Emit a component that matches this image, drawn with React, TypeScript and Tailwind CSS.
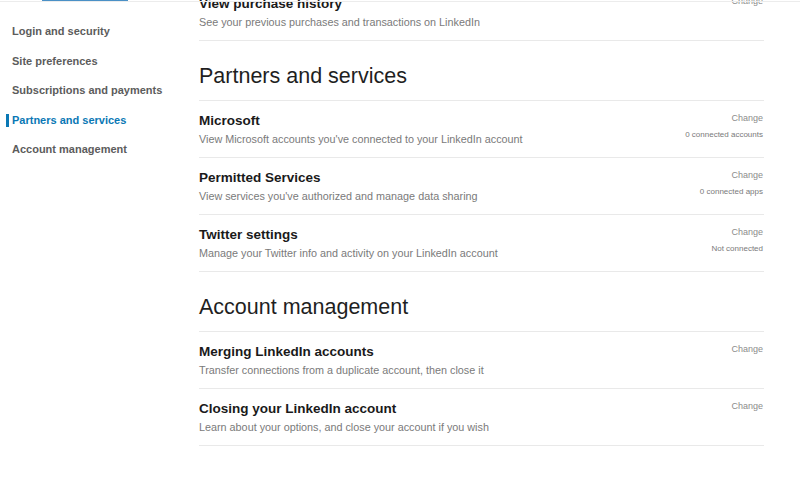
import React from 'react';

type Row = { title: string; desc: string; action?: string; meta?: string };

const navItems = [
  'Login and security',
  'Site preferences',
  'Subscriptions and payments',
  'Partners and services',
  'Account management',
];

const partners: Row[] = [
  {
    title: 'Microsoft',
    desc: "View Microsoft accounts you've connected to your LinkedIn account",
    action: 'Change',
    meta: '0 connected accounts',
  },
  {
    title: 'Permitted Services',
    desc: "View services you've authorized and manage data sharing",
    action: 'Change',
    meta: '0 connected apps',
  },
  {
    title: 'Twitter settings',
    desc: 'Manage your Twitter info and activity on your LinkedIn account',
    action: 'Change',
    meta: 'Not connected',
  },
];

const account: Row[] = [
  {
    title: 'Merging LinkedIn accounts',
    desc: 'Transfer connections from a duplicate account, then close it',
    action: 'Change',
  },
  {
    title: 'Closing your LinkedIn account',
    desc: 'Learn about your options, and close your account if you wish',
    action: 'Change',
  },
];

const SettingRow: React.FC<{ row: Row }> = ({ row }) => (
  <li className="flex justify-between border-b border-[#e9e9e9] pt-[10px] pb-[10px]">
    <div className="flex flex-col">
      <span className="text-[13.5px] leading-[20px] font-bold text-[#1a1a1a]">{row.title}</span>
      <span className="text-[10.8px] leading-[16px] text-[#7a7a7a]">{row.desc}</span>
    </div>
    <div className="flex flex-col items-end pr-[1px]">
      {row.action && <span className="text-[9px] leading-[14px] text-[#8c8c8c]">{row.action}</span>}
      {row.meta && <span className="mt-[4px] text-[8px] leading-[12px] text-[#7a7a7a]">{row.meta}</span>}
    </div>
  </li>
);

const SectionHeading: React.FC<{ children: React.ReactNode }> = ({ children }) => (
  <h2 className="border-b border-[#e9e9e9] pt-[21px] pb-[10px] text-[21.5px] leading-[28px] font-normal text-[#1f1f1f]">
    {children}
  </h2>
);

export default function App() {
  return (
    <div className="relative h-[481px] w-[800px] overflow-hidden bg-white font-['Liberation_Sans',Arial,sans-serif]">
      {/* header edge */}
      <div className="absolute inset-x-0 top-0 z-10 h-[2px] border-b border-[#ececec]">
        <div className="ml-[42px] h-[1px] w-[86px] bg-[#4a90c6]" />
      </div>

      <div className="flex">
        {/* Left nav */}
        <nav className="w-[199px] shrink-0 pt-[17px]">
          <ul className="flex flex-col">
            {navItems.map((item) => {
              const active = item === 'Partners and services';
              return (
                <li key={item} className="relative h-[29.5px] pl-[12px] text-[11px] leading-[29.5px] font-bold">
                  {active && <span className="absolute left-[6px] top-[8px] h-[13px] w-[3px] bg-[#0a78b5]" />}
                  <span className={active ? 'text-[#0a78b5]' : 'text-[#5c5c5c]'}>{item}</span>
                </li>
              );
            })}
          </ul>
        </nav>

        {/* Main content */}
        <main className="w-[565px] -mt-[16px]">
          <ul>
            <SettingRow
              row={{
                title: 'View purchase history',
                desc: 'See your previous purchases and transactions on LinkedIn',
                action: 'Change',
              }}
            />
          </ul>

          <SectionHeading>Partners and services</SectionHeading>
          <ul>
            {partners.map((r) => (
              <SettingRow key={r.title} row={r} />
            ))}
          </ul>

          <SectionHeading>Account management</SectionHeading>
          <ul>
            {account.map((r) => (
              <SettingRow key={r.title} row={r} />
            ))}
          </ul>
        </main>
      </div>
    </div>
  );
}
